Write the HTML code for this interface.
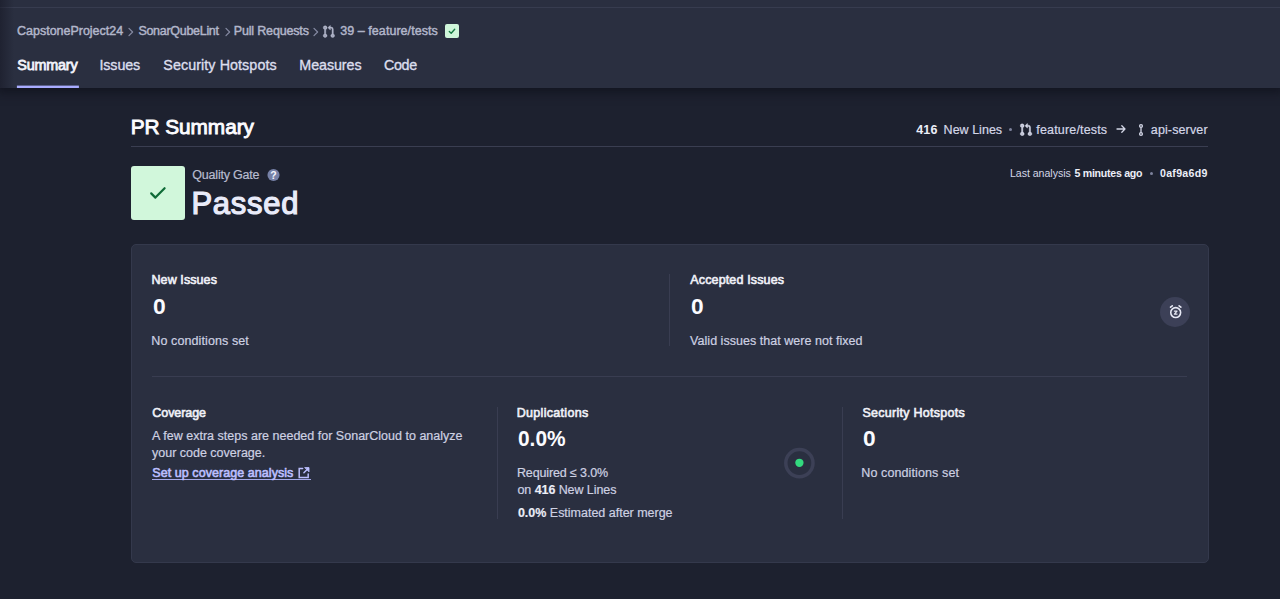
<!DOCTYPE html>
<html lang="en">
<head>
<meta charset="utf-8">
<title>PR Summary</title>
<style>
*{box-sizing:border-box;margin:0;padding:0}
html,body{width:1280px;height:599px;overflow:hidden;background:#1d212f}
body{position:relative;font-family:"Liberation Sans",Arial,sans-serif;color:#e4e6f3}
.t{position:absolute;white-space:nowrap;line-height:20px;height:20px}
.t b{color:#f0f1f8}
.abs{position:absolute}
#nav{position:absolute;left:0;top:0;width:1280px;height:88px;background:#2a2f40;box-shadow:0 2px 9px 3px rgba(12,13,24,.58)}
#topline{position:absolute;left:0;top:7px;width:1280px;height:1px;background:#373c4f}
#leftshade{position:absolute;left:0;top:0;width:14px;height:88px;background:linear-gradient(90deg,rgba(20,21,34,.5),rgba(20,21,34,0))}
.vd{position:absolute;width:1px;background:#393d51}
</style>
</head>
<body>
<div id="nav"></div>
<div id="topline"></div>
<div id="leftshade"></div>

<!-- breadcrumb chevrons -->
<svg class="abs" style="left:126.700px;top:27.400px" width="8" height="10" viewBox="0 0 8 10" fill="none" stroke="#8489a1" stroke-width="1.250" stroke-linecap="round" stroke-linejoin="round"><path d="M2 1.400 5.600 5 2 8.600"/></svg>
<svg class="abs" style="left:223.500px;top:27.400px" width="8" height="10" viewBox="0 0 8 10" fill="none" stroke="#8489a1" stroke-width="1.250" stroke-linecap="round" stroke-linejoin="round"><path d="M2 1.400 5.600 5 2 8.600"/></svg>
<svg class="abs" style="left:312px;top:27.400px" width="8" height="10" viewBox="0 0 8 10" fill="none" stroke="#8489a1" stroke-width="1.250" stroke-linecap="round" stroke-linejoin="round"><path d="M2 1.400 5.600 5 2 8.600"/></svg>
<!-- PR icon -->
<svg class="abs" style="left:321.900px;top:24.900px" width="13.400" height="13.400" viewBox="0 0 16 16" fill="#b2b6ca" stroke="#b2b6ca" stroke-width=".5"><path d="M1.500 3.250a2.250 2.250 0 1 1 3 2.122v5.256a2.251 2.251 0 1 1-1.500 0V5.372A2.250 2.250 0 0 1 1.500 3.250Zm5.677-.177L9.573.677A.25.25 0 0 1 10 .854V2.500h1A2.500 2.500 0 0 1 13.500 5v5.628a2.251 2.251 0 1 1-1.500 0V5a1 1 0 0 0-1-1h-1v1.646a.25.25 0 0 1-.427.177L7.177 3.427a.25.25 0 0 1 0-.354ZM3.750 2.500a.75.75 0 1 0 0 1.500.75.75 0 0 0 0-1.500Zm0 9.500a.75.75 0 1 0 0 1.500.75.75 0 0 0 0-1.500Zm8.250.75a.75.75 0 1 0 1.500 0 .75.75 0 0 0-1.500 0Z"/><circle cx="3.750" cy="3.250" r="1" opacity=".75"/><circle cx="3.750" cy="12.750" r="1" opacity=".75"/><circle cx="12.750" cy="12.750" r="1" opacity=".75"/></svg>
<!-- green badge -->
<div class="abs" style="left:445px;top:24px;width:14px;height:14px;background:#cff6da;border-radius:2px"></div>
<svg class="abs" style="left:445px;top:24px" width="14" height="14" viewBox="0 0 14 14" fill="none" stroke="#157a42" stroke-width="1.350" stroke-linecap="round" stroke-linejoin="round"><path d="M4.300 7.500 6.200 9.300 9.700 5.300"/></svg>

<!-- active tab underline -->
<svg class="abs" style="left:16px;top:84px" width="64" height="4" viewBox="0 0 64 4"><rect x=".9" y="1.600" width="62" height="2.400" fill="#a9acff"/></svg>

<!-- header rule -->
<div class="abs" style="left:131px;top:145.500px;width:1077px;height:1px;background:#3a3e51"></div>

<!-- header right icons -->
<div class="abs" style="left:1009.200px;top:128.200px;width:3.200px;height:3.200px;border-radius:2px;background:#7d829c"></div>
<svg class="abs" style="left:1019.100px;top:122.700px" width="13.700" height="13.700" viewBox="0 0 16 16" fill="#d4d7e7" stroke="#d4d7e7" stroke-width=".5"><path d="M1.500 3.250a2.250 2.250 0 1 1 3 2.122v5.256a2.251 2.251 0 1 1-1.500 0V5.372A2.250 2.250 0 0 1 1.500 3.250Zm5.677-.177L9.573.677A.25.25 0 0 1 10 .854V2.500h1A2.500 2.500 0 0 1 13.500 5v5.628a2.251 2.251 0 1 1-1.500 0V5a1 1 0 0 0-1-1h-1v1.646a.25.25 0 0 1-.427.177L7.177 3.427a.25.25 0 0 1 0-.354ZM3.750 2.500a.75.75 0 1 0 0 1.500.75.75 0 0 0 0-1.500Zm0 9.500a.75.75 0 1 0 0 1.500.75.75 0 0 0 0-1.500Zm8.250.75a.75.75 0 1 0 1.500 0 .75.75 0 0 0-1.500 0Z"/><circle cx="3.750" cy="3.250" r="1" opacity=".75"/><circle cx="3.750" cy="12.750" r="1" opacity=".75"/><circle cx="12.750" cy="12.750" r="1" opacity=".75"/></svg>
<svg class="abs" style="left:1115.400px;top:123.200px" width="12" height="12" viewBox="0 0 12 12" fill="none" stroke="#d4d7e7" stroke-width="1.300" stroke-linecap="round" stroke-linejoin="round"><path d="M2 6h8M6.800 2.800 10 6 6.800 9.200"/></svg>
<svg class="abs" style="left:1134.250px;top:122.600px" width="14" height="14" viewBox="0 0 16 16" fill="none" stroke="#d4d7e7" stroke-width="1.500"><circle cx="8" cy="3.400" r="1.600"/><circle cx="8" cy="12.600" r="1.600"/><path d="M8 5v6"/></svg>

<!-- quality gate -->
<div class="abs" style="left:131px;top:166.300px;width:54px;height:54px;background:#d1f7db;border-radius:3px"></div>
<svg class="abs" style="left:148px;top:183.400px" width="20" height="20" viewBox="0 0 20 20" fill="none" stroke="#0f6b37" stroke-width="2.200" stroke-linecap="round" stroke-linejoin="round"><path d="M3.200 10.400 7.400 14.600 16.600 5.200"/></svg>
<svg class="abs" style="left:263px;top:165px" width="20" height="20" viewBox="0 0 20 20"><circle cx="10.500" cy="10" r="6.050" fill="#7681a7"/></svg>
<span class="t" style="left:270.300px;top:165px;font-size:10.500px;font-weight:700;color:#f6f7fd">?</span>

<div class="abs" style="left:1149.700px;top:171.500px;width:3.200px;height:3.200px;border-radius:2px;background:#7d829c"></div>

<!-- card -->
<div class="abs" style="left:131px;top:244px;width:1078px;height:319px;background:#2a2f40;border:1px solid #34394c;border-radius:5px"></div>
<div class="vd" style="left:669px;top:274px;height:72px"></div>
<div class="abs" style="left:1160px;top:297px;width:30px;height:30px;border-radius:15px;background:#3c4057"></div>
<svg class="abs" style="left:1167.700px;top:304.300px" width="15.400" height="15.400" viewBox="0 0 14 14" fill="none" stroke="#e6e8f4" stroke-width="1.450" stroke-linecap="round" stroke-linejoin="round"><circle cx="7" cy="7.800" r="4.500"/><path d="M2.300 2.900 3.900 1.600M11.700 2.900 10.100 1.600"/><path d="M5.800 6.400h2.400L5.800 9.200h2.400" stroke-width="1.100"/></svg>
<div class="abs" style="left:152px;top:376px;width:1035px;height:1px;background:#393d51"></div>

<div class="abs" style="left:152px;top:479.200px;width:159px;height:1.100px;background:#a6a9ea"></div>
<svg class="abs" style="left:297.200px;top:465.800px" width="13.600" height="13.600" viewBox="0 0 13 13" fill="none" stroke="#bcbfff" stroke-width="1.400" stroke-linecap="round" stroke-linejoin="miter"><path d="M5.400 2.300H2.100v8.600h8.600V7.600M6.600 6.400 10.400 2.600"/><path d="M7.700 1.500h3.800v3.800z" fill="#bcbfff" stroke-width=".8" stroke-linejoin="round"/></svg>

<div class="vd" style="left:496.500px;top:407px;height:112px"></div>
<svg class="abs" style="left:779px;top:443px" width="40" height="40" viewBox="0 0 40 40"><circle cx="20.400" cy="20.100" r="13.600" fill="none" stroke="#3c4056" stroke-width="3.500"/><circle cx="20.400" cy="19.800" r="4.150" fill="#33da7f"/></svg>
<div class="vd" style="left:841.500px;top:407px;height:112px"></div>

<span class="t" style="left:17.1px;top:21.4px;font-size:12.5px;-webkit-text-stroke:0.45px #b2b6ca;color:#b2b6ca;letter-spacing:-0.02px;">CapstoneProject24</span>
<span class="t" style="left:138.4px;top:21.4px;font-size:12.5px;-webkit-text-stroke:0.45px #b2b6ca;color:#b2b6ca;letter-spacing:-0.29px;">SonarQubeLint</span>
<span class="t" style="left:233.8px;top:21.4px;font-size:12.5px;-webkit-text-stroke:0.45px #b2b6ca;color:#b2b6ca;letter-spacing:-0.17px;">Pull Requests</span>
<span class="t" style="left:340.3px;top:21.4px;font-size:12.5px;-webkit-text-stroke:0.45px #b2b6ca;color:#b2b6ca;letter-spacing:0.05px;">39 – feature/tests</span>
<span class="t" style="left:17.3px;top:55.3px;font-size:14.4px;-webkit-text-stroke:0.8px #f1f2fa;color:#f1f2fa;letter-spacing:-0.21px;">Summary</span>
<span class="t" style="left:99.4px;top:55.3px;font-size:14.3px;-webkit-text-stroke:0.35px #dcdeed;color:#dcdeed;letter-spacing:-0.09px;">Issues</span>
<span class="t" style="left:163.3px;top:55.3px;font-size:14.3px;-webkit-text-stroke:0.35px #dcdeed;color:#dcdeed;letter-spacing:0.08px;">Security Hotspots</span>
<span class="t" style="left:299.3px;top:55.3px;font-size:14.3px;-webkit-text-stroke:0.35px #dcdeed;color:#dcdeed;letter-spacing:-0.07px;">Measures</span>
<span class="t" style="left:383.9px;top:55.3px;font-size:14.3px;-webkit-text-stroke:0.35px #dcdeed;color:#dcdeed;letter-spacing:-0.33px;">Code</span>
<span class="t" style="left:130.8px;top:112.6px;font-size:20.8px;-webkit-text-stroke:0.9px #fcfcff;line-height:28px;height:28px;color:#fcfcff;letter-spacing:-0.06px;">PR Summary</span>
<span class="t" style="left:916.2px;top:119.9px;font-size:12.5px;font-weight:700;color:#eceef8;letter-spacing:0.17px;">416</span>
<span class="t" style="left:943.6px;top:119.9px;font-size:12.5px;-webkit-text-stroke:0.2px #d4d7e7;color:#d4d7e7;letter-spacing:0.02px;">New Lines</span>
<span class="t" style="left:1036.3px;top:119.9px;font-size:12.5px;-webkit-text-stroke:0.2px #d4d7e7;color:#d4d7e7;letter-spacing:0.17px;">feature/tests</span>
<span class="t" style="left:1150.8px;top:119.9px;font-size:12.5px;-webkit-text-stroke:0.2px #d4d7e7;color:#d4d7e7;letter-spacing:0.13px;">api-server</span>
<span class="t" style="left:192.3px;top:165.2px;font-size:12.5px;-webkit-text-stroke:0.2px #b8bccf;color:#b8bccf;letter-spacing:-0.20px;">Quality Gate</span>
<span class="t" style="left:191.4px;top:184.2px;font-size:31.0px;-webkit-text-stroke:1.2px #e9ebf9;line-height:40px;height:40px;color:#e9ebf9;letter-spacing:0.75px;">Passed</span>
<span class="t" style="left:1010.0px;top:163.1px;font-size:10.6px;color:#d4d7e7;letter-spacing:-0.04px;">Last analysis</span>
<span class="t" style="left:1074.5px;top:163.1px;font-size:10.6px;font-weight:700;color:#eceef8;letter-spacing:-0.27px;">5 minutes ago</span>
<span class="t" style="left:1160.0px;top:163.1px;font-size:10.6px;font-weight:700;color:#eceef8;letter-spacing:0.29px;">0af9a6d9</span>
<span class="t" style="left:151.5px;top:270.2px;font-size:12.5px;-webkit-text-stroke:0.6px #f0f1f8;color:#f0f1f8;letter-spacing:0.09px;">New Issues</span>
<span class="t" style="left:152.5px;top:292.6px;font-size:22px;font-weight:700;line-height:28px;height:28px;color:#fbfbff;transform:scaleX(1.040);transform-origin:0 0;">0</span>
<span class="t" style="left:151.3px;top:330.7px;font-size:12.5px;-webkit-text-stroke:0.2px #ced1e2;color:#ced1e2;letter-spacing:0.10px;">No conditions set</span>
<span class="t" style="left:690.3px;top:270.2px;font-size:12.5px;-webkit-text-stroke:0.6px #f0f1f8;color:#f0f1f8;letter-spacing:0.14px;">Accepted Issues</span>
<span class="t" style="left:690.6px;top:292.6px;font-size:22px;font-weight:700;line-height:28px;height:28px;color:#fbfbff;transform:scaleX(1.032);transform-origin:0 0;">0</span>
<span class="t" style="left:690.1px;top:330.7px;font-size:12.5px;-webkit-text-stroke:0.2px #ced1e2;color:#ced1e2;letter-spacing:0.03px;">Valid issues that were not fixed</span>
<span class="t" style="left:152.3px;top:402.5px;font-size:12.5px;-webkit-text-stroke:0.6px #f0f1f8;color:#f0f1f8;letter-spacing:-0.06px;">Coverage</span>
<span class="t" style="left:152.1px;top:426.4px;font-size:12.5px;-webkit-text-stroke:0.2px #ced1e2;color:#ced1e2;letter-spacing:0.01px;">A few extra steps are needed for SonarCloud to analyze</span>
<span class="t" style="left:152.1px;top:442.9px;font-size:12.5px;-webkit-text-stroke:0.2px #ced1e2;color:#ced1e2;letter-spacing:-0.01px;">your code coverage.</span>
<span class="t" style="left:152.3px;top:463.0px;font-size:12.5px;-webkit-text-stroke:0.6px #bcbfff;color:#bcbfff;letter-spacing:0.06px;">Set up coverage analysis</span>
<span class="t" style="left:516.7px;top:402.5px;font-size:12.5px;-webkit-text-stroke:0.6px #f0f1f8;color:#f0f1f8;letter-spacing:0.31px;">Duplications</span>
<span class="t" style="left:517.9px;top:424.7px;font-size:22px;font-weight:700;line-height:28px;height:28px;color:#fbfbff;transform:scaleX(0.948);transform-origin:0 0;">0.0%</span>
<span class="t" style="left:516.9px;top:463.0px;font-size:12.5px;-webkit-text-stroke:0.2px #ced1e2;color:#ced1e2;letter-spacing:-0.12px;">Required ≤ 3.0%</span>
<span class="t" style="left:517.5px;top:479.5px;font-size:12.5px;-webkit-text-stroke:0.2px #ced1e2;color:#ced1e2;letter-spacing:-0.08px;">on <b>416</b> New Lines</span>
<span class="t" style="left:517.9px;top:503.4px;font-size:12.5px;-webkit-text-stroke:0.2px #ced1e2;color:#ced1e2;letter-spacing:-0.01px;"><b>0.0%</b> Estimated after merge</span>
<span class="t" style="left:862.5px;top:402.5px;font-size:12.5px;-webkit-text-stroke:0.6px #f0f1f8;color:#f0f1f8;letter-spacing:0.27px;">Security Hotspots</span>
<span class="t" style="left:863.1px;top:425.0px;font-size:22px;font-weight:700;line-height:28px;height:28px;color:#fbfbff;transform:scaleX(1.032);transform-origin:0 0;">0</span>
<span class="t" style="left:861.3px;top:462.7px;font-size:12.5px;-webkit-text-stroke:0.2px #ced1e2;color:#ced1e2;letter-spacing:0.11px;">No conditions set</span>
</body>
</html>
